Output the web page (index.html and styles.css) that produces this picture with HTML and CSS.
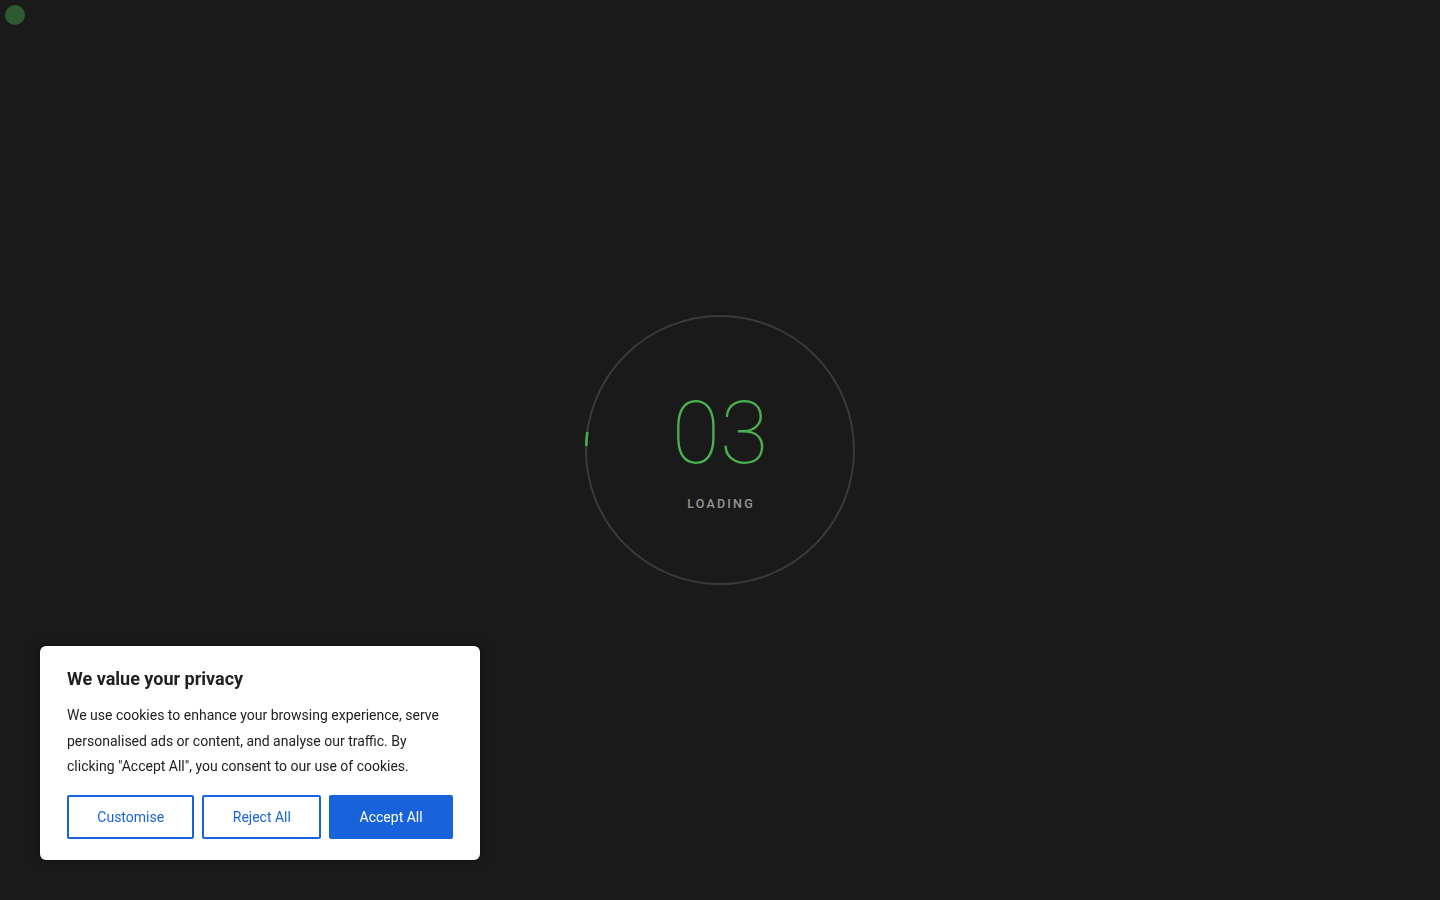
FILE: index.html
```html
<!DOCTYPE html>
<html lang="en">
<head>
    <meta charset="UTF-8">
    <meta name="viewport" content="width=device-width, initial-scale=1.0">
    <title>Loading</title>
    <link rel="stylesheet" href="styles.css">
</head>
<body>

<div class="cursor-dot"></div>

<div class="preloader">
    <div class="loader">
        <svg class="loader-ring" width="270" height="270" viewBox="0 0 270 270">
            <circle cx="135" cy="135" r="134" fill="none" stroke="#3a3a3a" stroke-width="2"/>
            <!-- progress arc, starts at the left edge -->
            <path d="M 1.3 131 A 134 134 0 0 1 2.3 117" fill="none" stroke="#4caf50" stroke-width="2.5"/>
        </svg>
        <div class="loader-count">03</div>
        <div class="loader-text">LOADING</div>
    </div>
</div>

<div class="cookie-bar">
    <p class="cookie-title">We value your privacy</p>
    <p class="cookie-desc">We use cookies to enhance your browsing experience, serve personalised ads or content, and analyse our traffic. By clicking "Accept All", you consent to our use of cookies.</p>
    <div class="cookie-btns">
        <button class="btn btn-outline">Customise</button>
        <button class="btn btn-outline">Reject All</button>
        <button class="btn btn-accept">Accept All</button>
    </div>
</div>

</body>
</html>
```

FILE: styles.css
```css
*{
    margin: 0;
    padding: 0;
    box-sizing: border-box;
}

body{
    background-color: #1a1a1a;
    font-family: Roboto, "Liberation Sans", sans-serif;
    height: 900px;
    overflow: hidden;
}

.cursor-dot{
    position: fixed;
    left: 5px;
    top: 5px;
    width: 20px;
    height: 20px;
    border-radius: 50%;
    background-color: #2e5a33;
}

.preloader{
    height: 900px;
    display: flex;
    align-items: center;
    justify-content: center;
}

.loader{
    position: relative;
    width: 270px;
    height: 270px;
    display: flex;
    flex-direction: column;
    align-items: center;
    justify-content: center;
    padding-bottom: 2px;
}

.loader-ring{
    position: absolute;
    left: 0;
    top: 0;
}

.loader-count{
    font-size: 88px;
    line-height: 88px;
    font-weight: 100;
    color: #4caf50;
}

.loader-text{
    margin-top: 20px;
    font-size: 12.5px;
    line-height: 13px;
    font-weight: 500;
    letter-spacing: 2.2px;
    padding-left: 2.2px;
    color: #959595;
}

.cookie-bar{
    position: fixed;
    left: 40px;
    bottom: 40px;
    width: 440px;
    background-color: #fff;
    border-radius: 6px;
    padding: 24px 27px 21px;
    box-shadow: 0 0 12px rgba(0, 0, 0, 0.35);
    color: #212121;
}

.cookie-title{
    font-size: 18px;
    line-height: 18px;
    font-weight: 700;
    margin-bottom: 15px;
}

.cookie-desc{
    font-size: 14px;
    line-height: 25.7px;
    margin-bottom: 15px;
}

.cookie-btns{
    display: flex;
    gap: 8px;
}

.btn{
    flex: 1 1 auto;
    height: 44px;
    font-family: Roboto, "Liberation Sans", sans-serif;
    font-size: 14px;
    border: 2px solid #1863dc;
    border-radius: 2px;
    cursor: pointer;
}

.btn-outline{
    background-color: #fff;
    color: #1863dc;
}

.btn-accept{
    background-color: #1863dc;
    color: #fff;
}
```
